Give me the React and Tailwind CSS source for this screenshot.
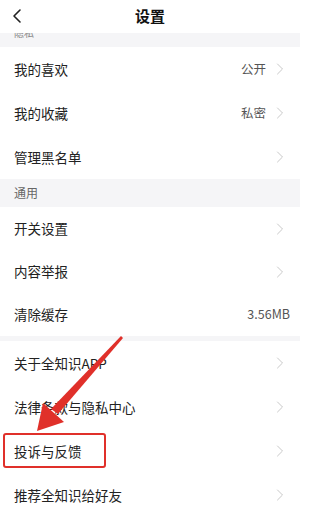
import { ChevronLeft, ChevronRight } from 'lucide-react';

const font = { fontFamily: '"Noto Sans CJK SC", "Noto Sans", sans-serif' };

const Row = ({ label, value, arrow = true, h = 'h-[44px]' }) => (
    <div className={`flex items-center justify-between bg-white pl-[14px] pr-[10px] ${h}`}>
        <span className="text-[13.5px] text-[#222]">{label}</span>
        <div className="flex items-center gap-[4px]">
            {value && <span className="text-[12.5px] text-[#555]">{value}</span>}
            {arrow && <ChevronRight className="h-[20px] w-[20px] text-[#c9c9c9]" strokeWidth={1.2} />}
        </div>
    </div>
);

const App = () => {
    return (
        <div className="relative h-[511px] w-[300px] overflow-hidden bg-white" style={font}>
            {/* header */}
            <div className="relative flex h-[33px] items-center justify-center bg-white">
                <ChevronLeft className="absolute left-[5px] top-[4px] h-[24px] w-[24px] text-[#222]" strokeWidth={1.6} />
                <span className="text-[15px] font-bold text-[#111]">设置</span>
            </div>

            {/* cut section title */}
            <div className="h-[14px] overflow-hidden bg-[#f5f5f7] pl-[14px]">
                <div className="-mt-[7px] text-[10px] leading-[14px] text-[#888]">隐私</div>
            </div>

            <Row label="我的喜欢" value="公开" />
            <Row label="我的收藏" value="私密" />
            <Row label="管理黑名单" />

            <div className="flex h-[28px] items-center bg-[#f5f5f7] pl-[14px] text-[12px] text-[#666]">通用</div>

            <Row label="开关设置" h="h-[43px]" />
            <Row label="内容举报" h="h-[43px]" />
            <Row label="清除缓存" value="3.56MB" arrow={false} h="h-[43px]" />

            <div className="h-[5px] bg-[#f5f5f7]" />

            <Row label="关于全知识APP" />
            <Row label="法律条款与隐私中心" />
            <Row label="投诉与反馈" />
            <Row label="推荐全知识给好友" />

            {/* annotation box */}
            <div className="absolute left-[3px] top-[433px] h-[35px] w-[103px] rounded-[3px] border-2 border-[#e0302a]" />

            {/* annotation arrow */}
            <svg className="absolute left-0 top-0" width="300" height="511" viewBox="0 0 300 511">
                <path d="M121 336 L123 338 L58 414 L51 409 Z" fill="#e0302a" />
                <path d="M37 431 L43 403 L64 422 Z" fill="#e0302a" />
            </svg>
        </div>
    );
};

export default App;
